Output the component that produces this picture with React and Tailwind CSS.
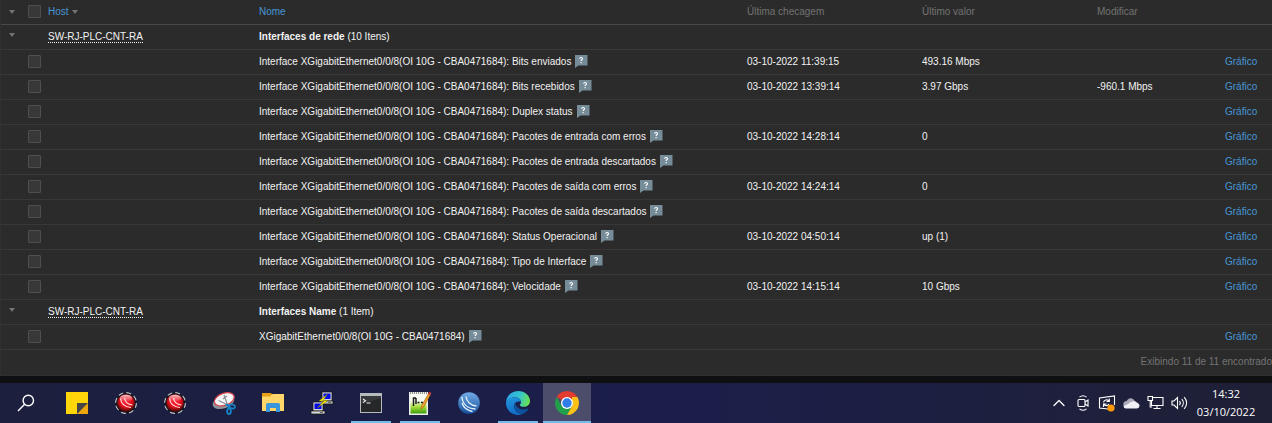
import { ChevronUp } from "lucide-react";

const PREFIX = "Interface XGigabitEthernet0/0/8(OI 10G - CBA0471684): ";

const groups = [
  {
    host: "SW-RJ-PLC-CNT-RA",
    name: "Interfaces de rede",
    count: "(10 Itens)",
    items: [
      { name: PREFIX + "Bits enviados", check: "03-10-2022 11:39:15", value: "493.16 Mbps" },
      { name: PREFIX + "Bits recebidos", check: "03-10-2022 13:39:14", value: "3.97 Gbps", change: "-960.1 Mbps" },
      { name: PREFIX + "Duplex status" },
      { name: PREFIX + "Pacotes de entrada com erros", check: "03-10-2022 14:28:14", value: "0" },
      { name: PREFIX + "Pacotes de entrada descartados" },
      { name: PREFIX + "Pacotes de saída com erros", check: "03-10-2022 14:24:14", value: "0" },
      { name: PREFIX + "Pacotes de saída descartados" },
      { name: PREFIX + "Status Operacional", check: "03-10-2022 04:50:14", value: "up (1)" },
      { name: PREFIX + "Tipo de Interface" },
      { name: PREFIX + "Velocidade", check: "03-10-2022 14:15:14", value: "10 Gbps" },
    ],
  },
  {
    host: "SW-RJ-PLC-CNT-RA",
    name: "Interfaces Name",
    count: "(1 Item)",
    items: [{ name: "XGigabitEthernet0/0/8(OI 10G - CBA0471684)" }],
  },
];

const Caret = () => (
  <svg width="6" height="4" viewBox="0 0 6 4" className="block">
    <path d="M0 0h6L3 4z" fill="#737373" />
  </svg>
);

const CheckBox = ({ label }) => (
  <input
    type="checkbox"
    aria-label={label}
    className="block size-[13px] appearance-none rounded-[1px] border border-[#4f4f4f] bg-[#383838] checked:bg-[#4796c4]"
  />
);

const HelpButton = ({ label }) => (
  <button type="button" aria-label={label}>
    <svg width="14" height="13" viewBox="0 0 14 13" className="block">
      <path d="M1 0h12.500v10.500H4.500L1 13z" fill="#768d99" />
      <path
        d="M5.600 3.700c.2-1.600 3-1.500 2.900.1 0 1-1.400 1-1.400 2.200M7.100 7v1.200"
        fill="none"
        stroke="#fff"
        strokeWidth="1.100"
      />
    </svg>
  </button>
);

const GroupRows = ({ group }) => (
  <>
    <tr className="h-[25px] border-b border-[#383838]">
      <td className="pl-2 align-top">
        <button type="button" aria-label={`Recolher ${group.name}`} className="block pt-2">
          <Caret />
        </button>
      </td>
      <td></td>
      <td>
        <a href="#host" className="border-b border-dotted border-[#f2f2f2]">
          {group.host}
        </a>
      </td>
      <td colSpan={5}>
        <b>{group.name}</b> {group.count}
      </td>
    </tr>
    {group.items.map((item) => (
      <tr key={item.name} className="h-[25px] border-b border-[#383838]">
        <td></td>
        <td>
          <CheckBox label={item.name} />
        </td>
        <td></td>
        <td>
          <div className="flex items-center gap-[3px]">
            <span>{item.name}</span>
            <HelpButton label={`Ajuda: ${item.name}`} />
          </div>
        </td>
        <td>{item.check}</td>
        <td>{item.value}</td>
        <td>{item.change}</td>
        <td>
          <a href="#grafico" className="text-[#4796d4]">
            Gráfico
          </a>
        </td>
      </tr>
    ))}
  </>
);

/* taskbar icons */

const SearchIcon = () => (
  <svg width="18" height="18" viewBox="0 0 18 18" fill="none" stroke="#fff" strokeWidth="1.400">
    <circle cx="11.300" cy="6.500" r="5.200" />
    <path d="M7.600 10.300L1 17" />
  </svg>
);

const StickyIcon = () => (
  <svg width="22" height="22" viewBox="0 0 22 22">
    <path d="M0 0h22v22H0z" fill="#ffd60a" />
    <path d="M11 22V11h11L22 22z" fill="#eda60d" />
    <path d="M11 11h11L11 22z" fill="#454545" />
  </svg>
);

const RedBallIcon = () => (
  <svg width="24" height="24" viewBox="0 0 24 24">
    <defs>
      <radialGradient id="redBall" cx="50%" cy="40%" r="58%">
        <stop offset="0" stopColor="#ff2336" />
        <stop offset="0.600" stopColor="#e3101c" />
        <stop offset="1" stopColor="#4a0808" />
      </radialGradient>
      <linearGradient id="redShine" x1="0" y1="0" x2="0" y2="1">
        <stop offset="0" stopColor="#fff" stopOpacity="0.750" />
        <stop offset="1" stopColor="#fff" stopOpacity="0" />
      </linearGradient>
    </defs>
    <circle cx="12" cy="12" r="10.400" fill="#15131c" />
    <circle cx="12" cy="12" r="10.400" fill="none" stroke="#c3c6cc" strokeWidth="1.100" strokeDasharray="5 3.170" />
    <circle cx="12" cy="12" r="8.800" fill="url(#redBall)" />
    <ellipse cx="12" cy="7.300" rx="6.300" ry="3.600" fill="url(#redShine)" />
    <path d="M6.500 7.500C7 12.500 11 16 17 16.500M10.500 7c.5 3.500 3.500 6.500 8 7" fill="none" stroke="#ffe3e3" strokeWidth="1.200" />
  </svg>
);

const SnipIcon = () => (
  <svg width="24" height="24" viewBox="0 0 24 24">
    <ellipse cx="11.500" cy="11" rx="11.300" ry="6.300" transform="rotate(-20 11.500 11)" fill="#8c929b" />
    <ellipse cx="12.300" cy="8.300" rx="10.300" ry="6" transform="rotate(-20 12.300 8.300)" fill="#f5f6f8" stroke="#d6454b" strokeWidth="1.200" />
    <path d="M12 4l3.500 10M6.500 9.500L16 14M15 5l-4 3" stroke="#8a8f96" strokeWidth="1.200" />
    <g fill="none" stroke="#1681c4" strokeWidth="1.800">
      <ellipse cx="20.200" cy="15.500" rx="2.800" ry="1.900" transform="rotate(15 20.200 15.500)" />
      <ellipse cx="17" cy="20.300" rx="1.900" ry="2.700" />
      <path d="M13.500 13.500l4.500 2M15.500 13l1.300 5" />
    </g>
  </svg>
);

const FolderIcon = () => (
  <svg width="22" height="19" viewBox="0 0 22 19">
    <path d="M0 0h9l1.500 2L9 4H0z" fill="#e5a218" />
    <path d="M0 3.500h8L10.500 1H22v17H0z" fill="#ffd667" />
    <path d="M4 19v-7.500L5 10h12l1 1.500V19h-4v-4H8v4z" fill="#3a96dd" />
  </svg>
);

const PuttyIcon = () => (
  <svg width="24" height="24" viewBox="0 0 24 24">
    <g stroke="#111" strokeWidth="0.700">
      <path d="M12 1h10v9H12z" fill="#d4d4d4" />
      <path d="M10 10h13v3H10z" fill="#bdbdbd" />
      <path d="M3 11h10v9H3z" fill="#d4d4d4" />
      <path d="M1 20h14v3H1z" fill="#d4d4d4" />
    </g>
    <path d="M13.500 2.500h7v5.500h-7zM4.500 12.500h7V18h-7z" fill="#0008e8" />
    <path d="M17.500 3L9 10h5l-7 7 11-7.500h-5z" fill="#fff200" stroke="#777000" strokeWidth="0.400" />
    <path d="M10 21.500h3M18 11.500h3" stroke="#555" strokeWidth="0.800" />
  </svg>
);

const TerminalIcon = () => (
  <svg width="22" height="20" viewBox="0 0 22 20">
    <path d="M0 0h22v20H0z" fill="#b8bbbe" />
    <path d="M1 3h20v16H1z" fill="#262729" />
    <path d="M1 11L21 5v-2H1z" fill="#38393b" />
    <path d="M3 6l2.500 1.800L3 9.600M6.500 10h4" fill="none" stroke="#f2f2f2" strokeWidth="1.100" />
  </svg>
);

const NotepadIcon = () => (
  <svg width="24" height="24" viewBox="0 0 24 24">
    <defs>
      <linearGradient id="noteFill" x1="0" y1="0" x2="0" y2="1">
        <stop offset="0.350" stopColor="#f8fbf2" />
        <stop offset="0.650" stopColor="#a8e03c" />
        <stop offset="1" stopColor="#3c9c0c" />
      </linearGradient>
    </defs>
    <path d="M1 1h19v23H1z" fill="#eef0e8" />
    <path d="M2.500 3h16v19.500h-16z" fill="url(#noteFill)" />
    <path d="M2 2h17" stroke="#777" strokeWidth="1.500" strokeDasharray="1 1" />
    <path d="M8 7H5.500v8M8 7v6M9.500 11.500h2M13 11.500h2" fill="none" stroke="#1c1c1c" strokeWidth="1.500" />
    <path d="M20.500 2.500L13.500 15l-.6 3.200 2.600-2L22.500 3.500z" fill="#f2a32e" stroke="#9c5a10" strokeWidth="0.600" />
    <path d="M20 3l1-2.200 2.400 1.200-1 2.200z" fill="#c33b3b" />
  </svg>
);

const BlueBallIcon = () => (
  <svg width="22" height="22" viewBox="0 0 22 22">
    <defs>
      <linearGradient id="blueBall" x1="0" y1="0" x2="0" y2="1">
        <stop offset="0" stopColor="#72ace6" />
        <stop offset="1" stopColor="#17519e" />
      </linearGradient>
    </defs>
    <circle cx="11" cy="11" r="10.800" fill="url(#blueBall)" />
    <path d="M4 5c.5 6.500 5 11.500 13.500 12M8 4.500c.5 5 4.500 9 10.500 9.500M4 11c1.500 4.500 5.500 7.500 10.500 8.500" fill="none" stroke="#e6f1fc" strokeWidth="1.300" />
  </svg>
);

const EdgeIcon = () => (
  <svg width="24" height="24" viewBox="0 0 24 24">
    <defs>
      <linearGradient id="edgeTop" x1="0" y1="0.300" x2="1" y2="0.500">
        <stop offset="0" stopColor="#2ba5e8" />
        <stop offset="0.550" stopColor="#35c4cf" />
        <stop offset="1" stopColor="#69e34f" />
      </linearGradient>
      <linearGradient id="edgeLeft" x1="0" y1="0" x2="0.300" y2="1">
        <stop offset="0" stopColor="#2298e0" />
        <stop offset="1" stopColor="#116dc7" />
      </linearGradient>
    </defs>
    <path d="M0 11.500C.3 5 5.500 0 12 0c7 0 12 4.800 12 9.800 0 4-3 6-6.200 6-2.500 0-4-.9-4-1.800 0-.8 1.200-1.100 1.200-3 0-2.500-2.500-4.800-6-4.800C4.800 6.200 1.500 8.500 0 11.500z" fill="url(#edgeTop)" />
    <path d="M0 11.500c1.500-3.800 5-5.300 8.500-5.300 3.800 0 6.300 2 6.500 4.600-5-1.600-8.500 2.400-6.500 6.700 1.500 3.300 4.300 5.500 7 6A12 12 0 010 11.500z" fill="url(#edgeLeft)" />
    <path d="M9.500 11.500c-3.500 4.200.5 10.200 6 12 3-.9 5.500-3 7-5.500.2-.5-.2-.8-.6-.5-5.400 2.700-12.500-.2-12.400-6z" fill="#0c539e" />
  </svg>
);

const ChromeIcon = () => (
  <svg width="24" height="24" viewBox="0 0 24 24">
    <path d="M12 12L1.610 6A12 12 0 0122.390 6z" fill="#e33b2e" />
    <path d="M1.610 6A12 12 0 0012 24l5.200-9L12 12 6.800 15z" fill="#229f4b" />
    <path d="M22.390 6A12 12 0 0112 24l5.200-9L17 6z" fill="#fbc116" />
    <circle cx="12" cy="12" r="6" fill="#fff" />
    <circle cx="12" cy="12" r="4.700" fill="#2f7de8" />
  </svg>
);

const MeetIcon = () => (
  <svg width="12" height="16" viewBox="0 0 12 16" fill="none" stroke="#fff" strokeWidth="1.100">
    <rect x="1" y="4.500" width="7" height="7" rx="1" />
    <path d="M8 7l3-2v6L8 9M2.500 2.200c2-1.700 5-1.700 7 0M2.500 13.800c2 1.700 5 1.700 7 0" />
  </svg>
);

const UpdateIcon = () => (
  <svg width="18" height="18" viewBox="0 0 18 18" fill="none" stroke="#fff" strokeWidth="1.100">
    <path d="M10 15L1.500 14V4L16.500 2v9" />
    <path d="M5.500 8.500c.5-2.500 3.500-3.500 5.500-1.500M11.300 4.500V7.500H8.500M11 10c-1 2-4 2.300-5.200.3M5.500 13v-3h3" />
    <circle cx="13" cy="14" r="3.600" fill="#ff9800" stroke="none" />
  </svg>
);

const CloudIcon = () => (
  <svg width="17" height="12" viewBox="0 0 17 12">
    <path d="M4 11a3.500 3.500 0 01-.3-7C5 .5 10 0 11.500 3.800L15 6 9 11z" fill="#a9a9b7" />
    <path d="M3 11.500C1.500 11.500.5 10.300.7 9 3 8.500 6 6 8.200 5c2-1 4-1 5 .7 2 .2 3.300 1.300 3.300 2.800 0 1.800-1.200 3-3 3z" fill="#f0f0f4" />
  </svg>
);

const NetworkIcon = () => (
  <svg width="17" height="15" viewBox="0 0 17 15" fill="none" stroke="#fff" strokeWidth="1.100">
    <path d="M6 2.500h10v8H4.500V6M10 10.500v3M6.500 13.500h7" />
    <path d="M1 1.500h4.500v4H1zM3.200 5.500V12H5" />
  </svg>
);

const SpeakerIcon = () => (
  <svg width="17" height="14" viewBox="0 0 17 14" fill="none" stroke="#fff" strokeWidth="1.100">
    <path d="M1 5h2l3.500-3.500v11L3 9H1z" />
    <path d="M8.500 5c1 1.200 1 2.800 0 4M10.800 3.200c2 2.200 2 5.400 0 7.600M13.200 1.200c3.200 3.400 3.200 8.200 0 11.600" />
  </svg>
);

const apps = [
  { label: "Notas", Icon: StickyIcon },
  { label: "Terminal serial", Icon: RedBallIcon },
  { label: "Terminal serial 2", Icon: RedBallIcon },
  { label: "Captura", Icon: SnipIcon },
  { label: "Explorador de Arquivos", Icon: FolderIcon },
  { label: "PuTTY", Icon: PuttyIcon },
  { label: "Prompt de Comando", Icon: TerminalIcon, open: true },
  { label: "Editor de texto", Icon: NotepadIcon, open: true },
  { label: "Rede", Icon: BlueBallIcon },
  { label: "Edge", Icon: EdgeIcon, open: true },
  { label: "Chrome", Icon: ChromeIcon, open: true, active: true },
];

const tray = [
  { label: "Câmera", Icon: MeetIcon },
  { label: "Atualização", Icon: UpdateIcon },
  { label: "Nuvem", Icon: CloudIcon },
  { label: "Rede local", Icon: NetworkIcon },
  { label: "Volume", Icon: SpeakerIcon },
];

const AppButton = ({ app }) => (
  <button
    type="button"
    aria-label={app.label}
    className={`flex w-12 flex-col items-center ${app.active ? "bg-[#4c4d6a]" : ""}`}
  >
    <span className="flex flex-1 items-center pt-0.5">
      <app.Icon />
    </span>
    <span className={`h-0.5 ${app.active ? "w-12" : "w-10"} ${app.open ? "bg-[#76b9ed]" : ""}`}></span>
  </button>
);

const Taskbar = () => (
  <footer className="flex h-10 items-stretch justify-between bg-linear-to-r from-[#1c1f3d] via-[#1b1e4b] to-[#1f2036] pl-0.5 text-white">
    <div className="flex gap-px">
      <button type="button" aria-label="Pesquisar" className="mr-0.5 flex w-12 items-center justify-center">
        <SearchIcon />
      </button>
      {apps.map((app) => (
        <AppButton key={app.label} app={app} />
      ))}
    </div>
    <div className="flex pr-[15px]">
      <button type="button" aria-label="Mostrar ícones ocultos" className="flex w-6 items-center justify-center">
        <ChevronUp size={20} strokeWidth={1.5} />
      </button>
      {tray.map((t) => (
        <button key={t.label} type="button" aria-label={t.label} className="flex w-6 items-center justify-center">
          <t.Icon />
        </button>
      ))}
      <div className="ml-1 flex w-[62px] flex-col items-center justify-center font-['Open_Sans',sans-serif] text-[11px] leading-[18px]">
        <time>14:32</time>
        <time>03/10/2022</time>
      </div>
    </div>
  </footer>
);

const App = () => {
  return (
    <div className="overflow-hidden bg-[#0e1012] font-['Liberation_Sans',Arial,sans-serif] text-[10px] leading-4 text-[#f2f2f2]">
      <main className="mb-[7px] border-b border-l border-[#303030] bg-[#2b2b2b]">
        <table className="w-full table-fixed border-collapse whitespace-nowrap text-left">
          <colgroup>
            <col className="w-[27px]" />
            <col className="w-5" />
            <col className="w-[211px]" />
            <col />
            <col className="w-[175px]" />
            <col className="w-[175px]" />
            <col className="w-32" />
            <col className="w-[47px]" />
          </colgroup>
          <thead>
            <tr className="h-6 border-b border-[#484848] text-[#737373]">
              <th className="pl-2">
                <button type="button" aria-label="Recolher tudo" className="block">
                  <Caret />
                </button>
              </th>
              <th>
                <CheckBox label="Selecionar tudo" />
              </th>
              <th className="font-normal">
                <a href="#host" className="flex items-center gap-[3px] text-[#4796d4]">
                  Host <Caret />
                </a>
              </th>
              <th className="font-normal">
                <a href="#nome" className="text-[#4796d4]">
                  Nome
                </a>
              </th>
              <th className="font-normal">Última checagem</th>
              <th className="font-normal">Último valor</th>
              <th className="font-normal">Modificar</th>
              <th></th>
            </tr>
          </thead>
          <tbody>
            {groups.map((group) => (
              <GroupRows key={group.name} group={group} />
            ))}
          </tbody>
        </table>
        <div className="flex h-[25px] items-center justify-end whitespace-nowrap text-[#737373]">
          <span>Exibindo 11 de 11 encontrado</span>
        </div>
      </main>
      <Taskbar />
    </div>
  );
};

export default App;
